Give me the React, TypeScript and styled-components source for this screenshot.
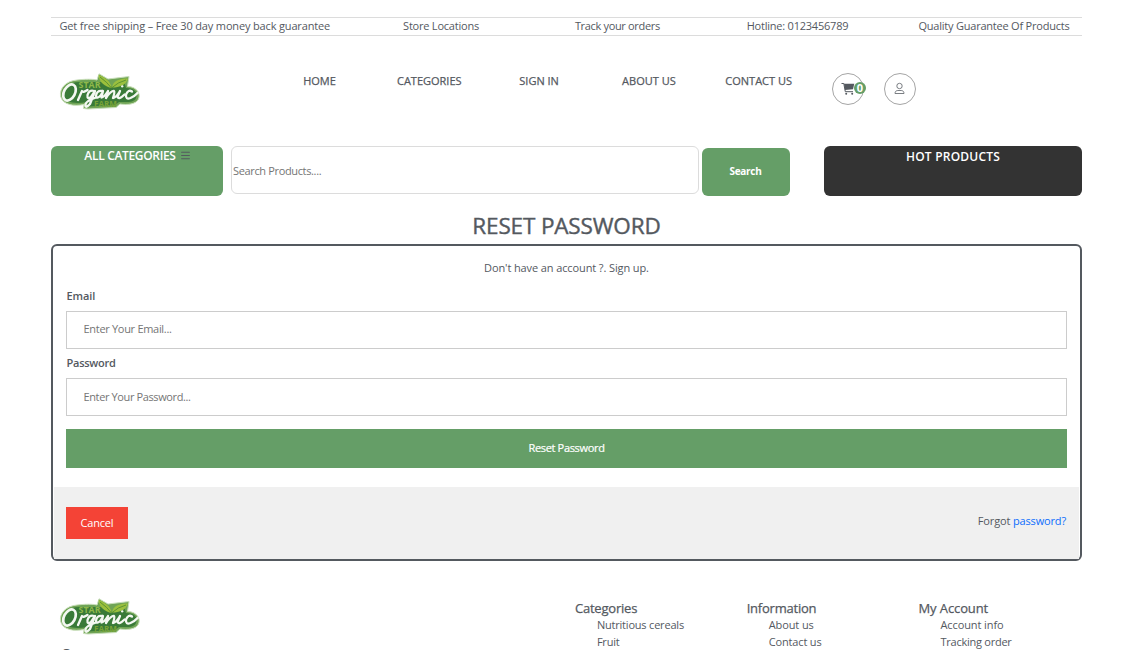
import React from "react";
import styled, { createGlobalStyle } from "styled-components";
import { BsList } from "react-icons/bs";

const ink = "#54595f";
const green = "#659e67";

const GlobalStyle = createGlobalStyle`
  *, *::before, *::after { box-sizing: border-box; }
  body {
    margin: 0;
    background: #fff;
    color: ${ink};
    font-family: "Open Sans", "Noto Sans", sans-serif;
    font-size: 11px;
    line-height: 17px;
  }
  input, button { font: inherit; color: inherit; margin: 0; }
  a { color: inherit; text-decoration: none; }
`;

const Page = styled.div`
  width: 1031px;
  height: 650px;
  margin-left: 51px;
  padding-top: 17px;
  overflow: hidden;
`;

/* Letter spacing is tuned per label so that each one keeps its measure. */
const Label = styled.span<{ $ls?: number }>`
  display: inline-block;
  white-space: nowrap;
  letter-spacing: ${(p) => p.$ls ?? 0}px;
`;

const TopBar = styled.div`
  display: grid;
  grid-template-columns: 343.6px repeat(4, 171.8px);
  height: 19px;
  border-top: 1px solid #dcdcdc;
  border-bottom: 1px solid #dcdcdc;
`;
const TopItem = styled.div`
  padding-left: 8.5px;
  line-height: 15px;
`;

const Header = styled.header`
  display: flex;
  height: 110px;
`;
const LogoBox = styled.div`
  width: 213.6px;
  padding: 37px 0 0 8px;
`;
const Nav = styled.nav`
  display: grid;
  grid-template-columns: repeat(5, 109.8px);
  padding-top: 36px;
  text-align: center;
  -webkit-text-stroke: 0.25px ${ink};
`;
const Actions = styled.div`
  display: flex;
  gap: 20px;
  padding: 37px 0 0 18.4px;
`;
const RoundButton = styled.a`
  position: relative;
  display: flex;
  justify-content: center;
  width: 32px;
  height: 32px;
  padding-top: 8px;
  border: 1px solid #a5a5a5;
  border-radius: 50%;
`;
const Badge = styled.span`
  position: absolute;
  top: 8px;
  right: -3px;
  width: 12px;
  height: 12px;
  border-radius: 50%;
  background: ${green};
  color: #fff;
  font-size: 11px;
  font-weight: 700;
  line-height: 12px;
  text-align: center;
`;

const SearchRow = styled.div`
  display: flex;
  height: 50px;
`;
const CategoriesButton = styled.div`
  display: flex;
  justify-content: center;
  gap: 3px;
  width: 172px;
  height: 50px;
  padding: 1px 0 0 2px;
  border-radius: 6px;
  background: ${green};
  color: #fff;
  font-size: 12px;
  font-weight: 600;
  svg { color: ${ink}; margin-top: 2px; }
`;
const SearchInput = styled.input`
  width: 468px;
  height: 48px;
  margin-left: 8px;
  padding: 0 1px;
  border: 1px solid #dcdcdc;
  border-radius: 6px;
  letter-spacing: -0.35px;
  &::placeholder { color: #757575; opacity: 1; }
`;
const SearchButton = styled.button`
  width: 88px;
  height: 48px;
  margin: 2px 0 0 3px;
  padding: 0 1px 1px 0;
  border: 0;
  border-radius: 6px;
  background: ${green};
  color: #fff;
  font-size: 10px;
  font-weight: 700;
`;
const HotProducts = styled.div`
  width: 258px;
  height: 50px;
  margin-left: 34px;
  padding-top: 2px;
  border-radius: 6px;
  background: #333;
  color: #fff;
  font-size: 12px;
  font-weight: 600;
  text-align: center;
`;

const Title = styled.h1`
  height: 48px;
  margin: 0;
  padding-top: 14px;
  font-size: 22.5px;
  font-weight: 400;
  line-height: 32px;
  text-align: center;
  -webkit-text-stroke: 0.4px ${ink};
`;

const Card = styled.form`
  height: 317px;
  border: 2px solid ${ink};
  border-radius: 6px;
  padding: 0 1px;
`;
const Fields = styled.div`
  display: flex;
  flex-direction: column;
  height: 241px;
  padding: 13px 12px 0;
`;
const SignUp = styled.p`
  margin: 0 0 11px;
  text-align: center;
`;
const FieldLabel = styled.label`
  height: 24px;
  padding-left: 0.5px;
  font-weight: 600;
`;
const Field = styled.input<{ $ls: number; $lift: number }>`
  width: 100%;
  height: 38px;
  margin-bottom: 5px;
  padding: 0 16px ${(p) => p.$lift}px 16.5px;
  border: 1px solid #ccc;
  letter-spacing: ${(p) => p.$ls}px;
  &::placeholder { color: #757575; opacity: 1; }
`;
const Submit = styled.button`
  height: 39px;
  margin-top: 8px;
  padding: 0 0 2px;
  border: 0;
  background: ${green};
  color: #fff;
  -webkit-text-stroke: 0.2px #fff;
`;
const CardFooter = styled.div`
  display: flex;
  justify-content: space-between;
  height: 72px;
  padding: 20px 12px 0;
  background: #f0f0f0;
`;
const Cancel = styled.button`
  width: 62px;
  height: 32px;
  padding: 0 0 1px;
  border: 0;
  background: #f44336;
  color: #fff;
`;
const Forgot = styled.div`
  padding: 5px 1px 0 0;
  a { color: #0d6efd; }
`;

const Footer = styled.footer`
  display: grid;
  grid-template-columns: 515.4px repeat(3, 171.8px);
  padding-top: 36px;
`;
const FooterBrand = styled.div`
  padding: 1px 0 0 8px;
`;
const BrandText = styled.div`
  padding-left: 2px;
  margin-top: 8px;
  font-size: 14px;
  line-height: 20px;
`;
const FooterColumn = styled.div`
  padding: 3px 0 0 8.5px;
`;
const FooterHeading = styled.h5`
  margin: 0;
  font-size: 13px;
  font-weight: 400;
  line-height: 16px;
  -webkit-text-stroke: 0.25px ${ink};
`;
const FooterList = styled.ul`
  margin: 0;
  padding-left: 22px;
  list-style: none;
`;

const Logo = () => (
  <svg width="82" height="38" viewBox="0 0 82 38" style={{ display: "block" }}>
    <path
      d="M1.5 23C.5 15 7 8 18 7C26 6 34 6 38 7L40 .8L49 6L70 3.5L68.500 13.500C78 13.500 82 21 79.500 26C77 31.500 68 32 61 31L57 34.500L29 36L24.500 35.500L25 31.500C15 33.500 3.500 32 1.500 23Z"
      fill="#6fa455"
      stroke="#c9dfba"
      strokeWidth="1"
    />
    <path
      d="M4 23C4 15 11 9 20 9L42 9L54 14L65 8L67 15C76 15 79 20 77 25C75 30 67 29 60 29L56 32L29 33.500L28 29C17 31 6 30 4 23Z"
      fill="#397a38"
    />
    <path d="M39.500 2C46 4 51 8 53 15C46 14 40 9 39.500 2Z" fill="#9bbf3c" />
    <path d="M53 14.500C54 8 60 5.500 69 5.500C67 12 61 14.500 53 14.500Z" fill="#9bc03f" />
    <path d="M41 4Q48 9 52.500 15Q59 9 67 7" fill="none" stroke="#4b8a30" strokeWidth=".8" />
    <text x="19.500" y="15" fontFamily="Open Sans, sans-serif" fontSize="8" fontWeight="700" fill="#8fb84a" textLength="22" lengthAdjust="spacingAndGlyphs">
      STAR
    </text>
    <text x="35" y="33.500" fontFamily="Open Sans, sans-serif" fontSize="8" fontWeight="700" fill="#78a336" textLength="23" lengthAdjust="spacingAndGlyphs">
      FARM
    </text>
    <g fill="none" stroke="#f4f8f2" strokeLinecap="round" strokeLinejoin="round">
      <ellipse cx="10.500" cy="19.500" rx="5.500" ry="8.600" strokeWidth="2.700" transform="rotate(28 10.500 19.500)" />
      <path
        strokeWidth="2.300"
        d="M19 27L23 18Q24 20 28.500 17M35 18Q30 16.500 28.500 22Q28 27 32 24L36 18L31 31Q26 36.500 26.500 31Q28 27.500 37 24.500M43.500 18Q38 17 37 22.500Q37.500 27 42 22L44 18L42.500 24.500Q45 24.500 49 18L47 25Q52 17.500 55 18Q56 19 54 25Q57 25 61 18L58.500 24Q60 27 65.500 21.500M73 18.500Q69.500 16 67 21.500Q66.500 27 71.500 25Q76 23 78.500 20"
      />
      <path strokeWidth="2" d="M63 13.500L63.500 13.300" />
    </g>
  </svg>
);

const CartIcon = () => (
  <svg width="14" height="14" viewBox="0 0 14 14" fill="none" stroke={ink}>
    <path d="M0.500 1.500H2.800L4.300 9.700H12" strokeWidth="1" />
    <path d="M3 1.700H13.300L12 7.300L4 8Z" fill={ink} stroke="none" />
    <circle cx="5.200" cy="11.800" r="1" fill={ink} stroke="none" />
    <circle cx="11.200" cy="11.800" r="1" fill={ink} stroke="none" />
  </svg>
);

const PersonIcon = () => (
  <svg width="12" height="14" viewBox="0 0 12 14" fill="none" stroke="#6c7076" strokeWidth="0.9">
    <circle cx="5.500" cy="4" r="2.700" />
    <path d="M1 11.500C1 9.500 2.200 8.500 3.800 8.500H7.200C8.800 8.500 10 9.500 10 11.500Z" strokeLinejoin="round" />
  </svg>
);

const topItems: [string, number][] = [
  ["Get free shipping – Free 30 day money back guarantee", -0.155],
  ["Store Locations", -0.22],
  ["Track your orders", -0.33],
  ["Hotline: 0123456789", -0.22],
  ["Quality Guarantee Of Products", -0.22],
];

const navItems = ["HOME", "CATEGORIES", "SIGN IN", "ABOUT US", "CONTACT US"];

const footerColumns: { title: string; ls: number; links: [string, number][] }[] = [
  { title: "Categories", ls: -0.2, links: [["Nutritious cereals", -0.2], ["Fruit", -0.2]] },
  { title: "Information", ls: -0.22, links: [["About us", -0.1], ["Contact us", -0.15]] },
  { title: "My Account", ls: -0.1, links: [["Account info", -0.1], ["Tracking order", -0.25]] },
];

export default function App() {
  return (
    <>
      <GlobalStyle />
      <Page>
        <TopBar>
          {topItems.map(([text, ls]) => (
            <TopItem key={text}><Label $ls={ls}>{text}</Label></TopItem>
          ))}
        </TopBar>
        <Header>
          <LogoBox><Logo /></LogoBox>
          <Nav>
            {navItems.map((text) => (
              <a href="#" key={text}><Label>{text}</Label></a>
            ))}
          </Nav>
          <Actions>
            <RoundButton href="#"><CartIcon /><Badge>0</Badge></RoundButton>
            <RoundButton href="#"><PersonIcon /></RoundButton>
          </Actions>
        </Header>
        <SearchRow>
          <CategoriesButton><Label $ls={-0.33}>ALL CATEGORIES</Label><BsList size={13} /></CategoriesButton>
          <SearchInput placeholder="Search Products...." />
          <SearchButton><Label $ls={-0.3}>Search</Label></SearchButton>
          <HotProducts><Label $ls={0.22}>HOT PRODUCTS</Label></HotProducts>
        </SearchRow>
        <Title><Label $ls={-0.15}>RESET PASSWORD</Label></Title>
        <Card>
          <Fields>
            <SignUp><Label $ls={-0.11}>Don't have an account ?. Sign up.</Label></SignUp>
            <FieldLabel><Label $ls={-0.1}>Email</Label></FieldLabel>
            <Field $ls={-0.3} $lift={3} placeholder="Enter Your Email..." />
            <FieldLabel><Label $ls={-0.25}>Password</Label></FieldLabel>
            <Field $ls={-0.38} $lift={1.5} type="password" placeholder="Enter Your Password..." />
            <Submit type="button"><Label $ls={-0.33}>Reset Password</Label></Submit>
          </Fields>
          <CardFooter>
            <Cancel type="button"><Label $ls={-0.2}>Cancel</Label></Cancel>
            <Forgot><Label $ls={-0.15}>Forgot <a href="#">password?</a></Label></Forgot>
          </CardFooter>
        </Card>
        <Footer>
          <FooterBrand><Logo /><BrandText>C</BrandText></FooterBrand>
          {footerColumns.map((col) => (
            <FooterColumn key={col.title}>
              <FooterHeading><Label $ls={col.ls}>{col.title}</Label></FooterHeading>
              <FooterList>
                {col.links.map(([text, ls]) => (
                  <li key={text}><Label $ls={ls}>{text}</Label></li>
                ))}
              </FooterList>
            </FooterColumn>
          ))}
        </Footer>
      </Page>
    </>
  );
}
